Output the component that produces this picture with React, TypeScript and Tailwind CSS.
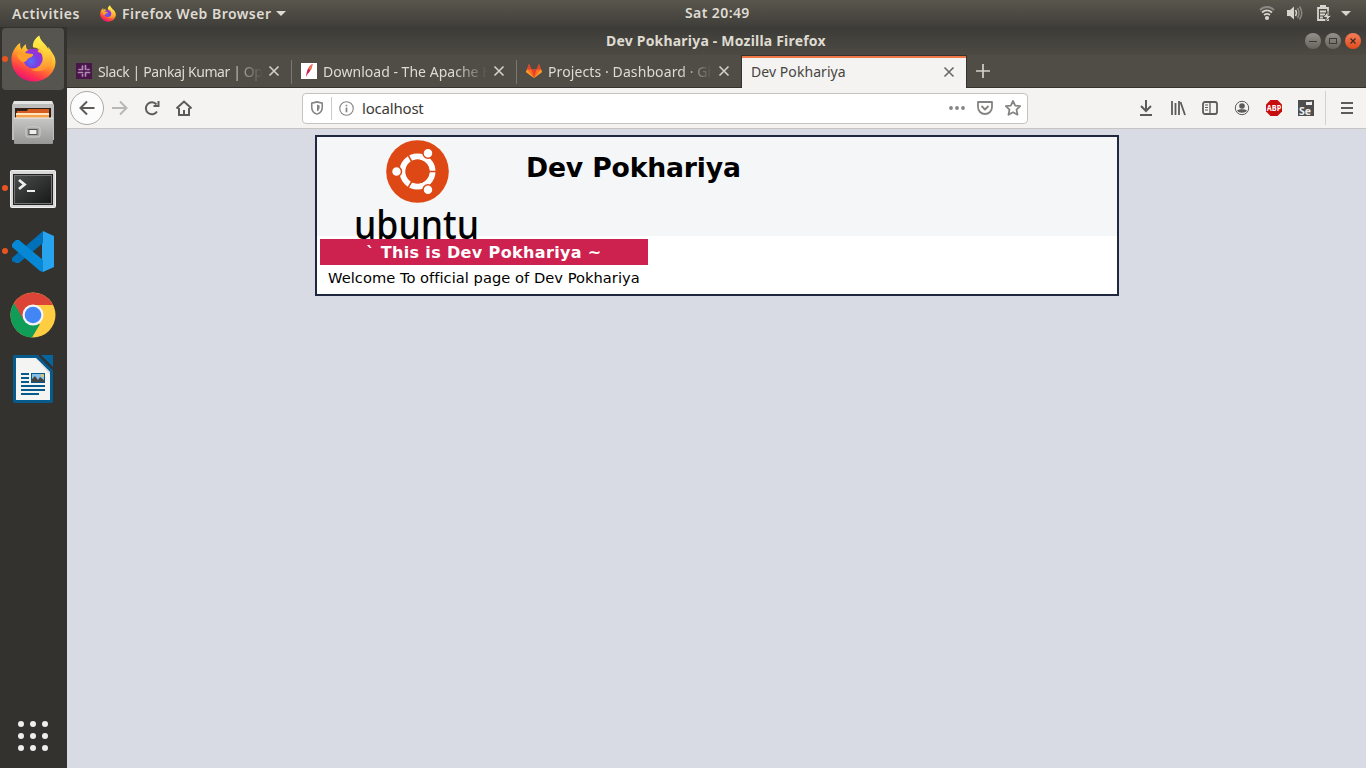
import React from "react";

const ui = "font-['Noto_Sans','Open_Sans',sans-serif] whitespace-nowrap";

function Firefox({ className, id }: { className: string; id: string }) {
  return (
    <svg viewBox="0 0 46 48" className={className}>
      <defs>
        <linearGradient id={id + "a"} x1="0.8" y1="0.05" x2="0.3" y2="1">
          <stop offset="0" stopColor="#fff44f" />
          <stop offset="0.35" stopColor="#ffb52a" />
          <stop offset="0.6" stopColor="#ff6a33" />
          <stop offset="0.8" stopColor="#ff3150" />
          <stop offset="1" stopColor="#e3107c" />
        </linearGradient>
        <radialGradient id={id + "b"} cx="0.4" cy="0.65" r="0.65">
          <stop offset="0" stopColor="#5b6df8" />
          <stop offset="0.5" stopColor="#7542e5" />
          <stop offset="1" stopColor="#a52bd0" />
        </radialGradient>
        <linearGradient id={id + "c"} x1="0.5" y1="0" x2="0.6" y2="1">
          <stop offset="0" stopColor="#fff44f" />
          <stop offset="0.5" stopColor="#ffd13a" />
          <stop offset="1" stopColor="#ff8a33" />
        </linearGradient>
      </defs>
      <path d="M9.500 8C9 11 9.500 13 11 14.500C12 12 13.500 10.500 15.500 9.500C15 12 15.500 13.500 17 15H27L38 14C42 17 45.500 22 45.500 27C45.500 39 35 47.500 23 47.500S0.500 38 0.500 25C0.500 18 4 12 9.500 8Z" fill={`url(#${id}a)`} />
      <path d="M29 0.500C23.500 4 22 8.500 22.500 12.500C29 13 33 18 32.500 23C32 30 27 34.500 20.500 35.500C31 40 42 34 42.500 23C43 19 41 16 38 12C38 13 38 14 38.500 15C36 9 30 7 29 0.500Z" fill={`url(#${id}c)`} />
      <circle cx="22.500" cy="24" r="10" fill={`url(#${id}b)`} />
      <path d="M6 19C12 17 16 19 22.500 19.500C23.500 22 19 23.500 17.500 24C16.500 25.500 15 28 12 27.500C8 26 6 22 6 19Z" fill="#ffa02a" />
      <path d="M26 13C33 14 35.500 20 32.500 25C33 20 31 18 27 17C30 16 29 14 26 13Z" fill="#ffc633" />
    </svg>
  );
}

function Close({ color }: { color: string }) {
  return (
    <svg viewBox="0 0 12 12" className="size-3 shrink-0" fill="none" stroke={color} strokeWidth="1.6">
      <path d="M1.500 1.500L10.500 10.500M10.500 1.500L1.500 10.500" />
    </svg>
  );
}

function Tab({ icon, children, tracking }: { icon: React.ReactNode; children: React.ReactNode; tracking: string }) {
  return (
    <div className="flex h-8 w-[225px] items-center pl-[9px] pr-[12px]">
      <div className="mr-[6px] size-4 shrink-0">{icon}</div>
      <div className={`mt-px h-5 w-[165px] overflow-hidden text-[14px] leading-5 text-[#dfdbd2] [mask-image:linear-gradient(90deg,#000_80%,transparent)] ${ui} ${tracking}`}>{children}</div>
      <div className="ml-[5px]"><Close color="#d5d1c8" /></div>
    </div>
  );
}

const Sep = () => <div className="-ml-px mt-[5px] h-6 w-px shrink-0 bg-[#7b7871]" />;

function TopBar() {
  return (
    <header className="flex h-[27px] shrink-0 items-center bg-linear-to-b from-[#59564d] to-[#403e39] pb-px text-[14px] font-semibold text-[#dfdbd2]">
      <div className={`w-[100px] pl-3 tracking-[0.56px] ${ui}`}>Activities</div>
      <Firefox id="s" className="h-[17px] w-4" />
      <div className={`ml-[6px] w-[150px] tracking-[0.48px] ${ui}`}>Firefox Web Browser</div>
      <svg viewBox="0 0 10 5" className="ml-1 h-[5px] w-[10px]"><path d="M0 0H10L5 5Z" fill="#dfdbd2" /></svg>
      <div className={`ml-[399px] mb-px w-[70px] tracking-[0.4px] ${ui}`}>Sat 20:49</div>
      <div className="ml-auto flex items-center pr-[15px]">
        <svg viewBox="0 0 16 16" className="size-4" fill="none" stroke="#d6d4cf" strokeWidth="1.800">
          <path d="M1 5C5 1 11 1 15 5" stroke="#8b8984" />
          <path d="M3 7.500C6 4.800 10 4.800 13 7.500M5 10C7 8.500 9 8.500 11 10" />
          <circle cx="8" cy="13" r="1.200" fill="#d6d4cf" />
        </svg>
        <svg viewBox="0 0 16 16" className="ml-[12px] size-4" fill="none" strokeWidth="1.500">
          <path d="M0 5H3L7 1.500V14.500L3 11H0Z" fill="#d6d4cf" />
          <path d="M8.500 5Q10.500 8 8.500 11" stroke="#d6d4cf" />
          <path d="M10.500 3Q13.500 8 10.500 13M12.500 1.500Q17 8 12.500 14.500" stroke="#8b8984" />
        </svg>
        <svg viewBox="0 0 16 18" className="ml-[13px] h-[18px] w-4">
          <path d="M2 4H12V16H2ZM4 2H10M4 7.500H10M4 10.500H9M4 13.500H7" fill="none" stroke="#d6d4cf" strokeWidth="1.800" />
          <path d="M12 7.500L7 13.500H10.500L9 18L15.500 11.500H12Z" fill="#d6d4cf" stroke="#4b4942" strokeWidth=".8" />
        </svg>
        <svg viewBox="0 0 10 5" className="ml-[9px] h-[5px] w-[10px]"><path d="M0 0H10L5 5Z" fill="#d6d4cf" /></svg>
      </div>
    </header>
  );
}

const dot = <span className="ml-[2px] size-[6px] shrink-0 rounded-full bg-[#e95420]" />;

function Dock() {
  return (
    <aside className="flex w-[67px] shrink-0 flex-col bg-[#33322e]">
      <div className="flex h-[64px] items-center">
        <div className="ml-[2px] flex h-[62px] w-[62px] items-center rounded-[4px] bg-[#565550]">
          <span className="size-[6px] shrink-0 rounded-full bg-[#e95420]" />
          <Firefox id="d" className="mb-[2px] ml-[3px] h-[47px] w-[45px]" />
        </div>
      </div>
      <div className="flex h-16 items-center pl-[12px]">
        <svg viewBox="0 0 42 44" className="mb-[2px] h-[44px] w-[42px]">
          <defs><linearGradient id="fg" x1="0" x2="0" y2="1"><stop stopColor="#c7c7c6" /><stop offset="1" stopColor="#979796" /></linearGradient></defs>
          <path d="M2 1H40L42 5V40H0V5Z" fill="#bdbdbc" /><path d="M2 1H40L41 4H1Z" fill="#e5e5e4" />
          <path d="M3 8H39V18H3Z" fill="#30201a" /><path d="M5 11H15L16 9H37V17H4Z" fill="#d65d22" /><path d="M4 13H37V15H4Z" fill="#ffe5bd" /><path d="M4 15H37V18H4Z" fill="#f5a04a" />
          <rect x="2" y="18" width="39" height="26" rx="1" fill="url(#fg)" /><path d="M2 18H41" stroke="#eee" />
          <rect x="14" y="27" width="14" height="10" rx="2" fill="#a6a6a5" stroke="#cecece" /><rect x="17" y="29.500" width="8" height="5" fill="#eee" stroke="#555" />
        </svg>
      </div>
      <div className="flex h-[66px] items-center">
        {dot}
        <svg viewBox="0 0 46 38" className="ml-[2px] mt-px h-[38px] w-[46px]">
          <defs><linearGradient id="tg" x1="0" x2="1" y2="1"><stop stopColor="#4b4d4d" /><stop offset="1" stopColor="#171919" /></linearGradient></defs>
          <rect x=".5" y=".5" width="45" height="37" rx="1" fill="#d8d8d8" stroke="#f0f0f0" /><rect x="3" y="4" width="40" height="31" fill="#222" />
          <rect x="4.500" y="5.500" width="37" height="28" fill="url(#tg)" stroke="#737373" />
          <path d="M9 10L14.500 14.500L9 19" fill="none" stroke="#eee" strokeWidth="2.800" /><path d="M17 21H25" stroke="#eee" strokeWidth="2" />
        </svg>
      </div>
      <div className="flex h-[60px] items-center">
        {dot}
        <svg viewBox="0 0 42 43" className="ml-[4px] h-[43px] w-[42px]">
          <path d="M31 1L42 6V37L31 42L30 31V12Z" fill="#28a4ee" />
          <path d="M31 1L0 28V31L4 33L7 33L31 13Z" fill="#0070b8" />
          <path d="M0 14L4 10L7 10L31 30V42L28 41L0 17Z" fill="#0788d4" />
        </svg>
      </div>
      <div className="flex h-[68px] items-center pl-[10px]">
        <svg viewBox="0 0 46 46" className="size-[46px]">
          <circle cx="23" cy="23" r="22.500" fill="#ffcd42" />
          <path d="M23 23L4 11A22.500 22.500 0 0 1 43 13H23Z" fill="#db4437" />
          <path d="M4 11L15 28L23 33L30 32L22 45.500A22.500 22.500 0 0 1 4 11Z" fill="#0f9d58" />
          <path d="M4 11L13 27L19 13Z" fill="#db4437" />
          <circle cx="23" cy="23" r="10.500" fill="#f5f5f5" /><circle cx="23" cy="23" r="8.300" fill="#4285f4" />
        </svg>
      </div>
      <div className="flex h-[60px] items-center pl-[13px]">
        <svg viewBox="0 0 40 48" className="h-[48px] w-[40px]">
          <path d="M1 0H26L40 14V46Q40 48 38 48H2Q0 48 0 46V1Z" fill="#075a8c" />
          <path d="M28 0H40V12Z" fill="#06659f" /><path d="M26 0L40 14" stroke="#33322e" strokeWidth="2" />
          <path d="M3 3H23L37 17V45H3Z" fill="#f4f4f3" /><path d="M23 3L37 17V20Z" fill="#ddd" />
          <path d="M8 19H16M8 23H16M8 27H16M8 31H32M8 35H32M8 39H26" stroke="#075a8c" strokeWidth="2" />
          <rect x="18.500" y="18.500" width="13" height="9" fill="#85bfe8" stroke="#075a8c" /><path d="M19 27V24L22 21L25 25L27 22L31 25V27Z" fill="#444" /><circle cx="29.500" cy="20.500" r="1.500" fill="#f6c34a" />
        </svg>
      </div>
      <div className="mt-auto mb-[17px] ml-[18px] grid w-[30px] grid-cols-3 gap-[6px]">
        {Array.from({ length: 9 }, (_, i) => <span key={i} className="size-[6px] rounded-full bg-[#eeeeec]" />)}
      </div>
    </aside>
  );
}

function Titlebar() {
  return (
    <div className="flex h-[28px] shrink-0 items-center bg-linear-to-b from-[#3c3b37] to-[#4d4a43] pr-[5px]">
      <div className={`ml-[539px] mb-[2px] text-[14px] font-bold text-[#dfdbd2] tracking-[0.2px] ${ui}`}>Dev Pokhariya - Mozilla Firefox</div>
      <div className="ml-auto flex gap-1">
        <span className="flex size-4 items-center justify-center rounded-full bg-linear-to-b from-[#94918b] to-[#66645d]"><i className="h-px w-[8px] bg-[#3c3b37]" /></span>
        <span className="flex size-4 items-center justify-center rounded-full bg-linear-to-b from-[#94918b] to-[#66645d]"><i className="h-[6px] w-[8px] border border-[#3c3b37]" /></span>
        <span className="flex size-4 items-center justify-center rounded-full bg-linear-to-b from-[#f37d58] to-[#df4a16]"><svg viewBox="0 0 6 6" className="size-[6px]"><path d="M.5 .5L5.500 5.500M5.500 .5L.5 5.500" stroke="#3c2a22" strokeWidth="1.200" /></svg></span>
      </div>
    </div>
  );
}

function Tabs() {
  return (
    <div className="flex h-[33px] shrink-0 border-b border-[#33322e] bg-[#504d46]">
      <Tab tracking="tracking-[-0.4px]" icon={
        <svg viewBox="0 0 16 16" className="size-4"><rect width="16" height="16" fill="#4a154b" /><path d="M6.500 3V6.500M9.500 2.500V6.500M3 6.500H5M11.500 6.500H13M2.500 9.500H6.500M9.500 9.500V13M6.500 11.500V13M9.500 9.500H13.500" stroke="#b18ab3" strokeWidth="1.700" strokeLinecap="round" /></svg>
      }>Slack | Pankaj Kumar | OpsTree</Tab>
      <Sep />
      <Tab tracking="tracking-[0.02px]" icon={
        <svg viewBox="0 0 16 16" className="size-4"><rect width="16" height="16" fill="#fff" /><path d="M11.500 1C7.500 3 5.500 8 5 14L6.500 11C9 9 11 5 11.500 1Z" fill="#c92052" /><path d="M11.500 1C9 2 8 4 7.500 6L10 7C11 5 11.500 3 11.500 1Z" fill="#ef7650" /></svg>
      }>Download - The Apache HTTP</Tab>
      <Sep />
      <Tab tracking="tracking-[0.1px]" icon={
        <svg viewBox="0 0 16 16" className="size-4"><path d="M0 9L3 1L5.500 6.500H10.500L13 1L16 9L8 15Z" fill="#fc6d26" /><path d="M5.500 6.500H10.500L8 15Z" fill="#e24329" /><path d="M0 9L1 6.500L8 15ZM16 9L15 6.500L8 15Z" fill="#fca326" /><path d="M1 6.500L3 1L5.500 6.500ZM10.500 6.500L13 1L15 6.500Z" fill="#e24329" /></svg>
      }>Projects · Dashboard · GitLab</Tab>
      <div className="-ml-px flex h-[33px] w-[226px] shrink-0 items-center justify-between border-x border-t border-[#33322e] bg-[#f4f3f2] pl-[9px] pr-[11px] shadow-[inset_0_2px_0_#f07746]">
        <span className={`text-[14px] leading-5 text-[#46443e] tracking-[0.06px] ${ui}`}>Dev Pokhariya</span>
        <Close color="#6a6864" />
      </div>
      <svg viewBox="0 0 14 14" className="ml-[9px] mt-[9px] size-[14px]"><path d="M7 0V14M0 7H14" stroke="#d5d1c8" strokeWidth="1.700" /></svg>
    </div>
  );
}

function Toolbar() {
  const s = { fill: "none", stroke: "#5c5b59", strokeWidth: 2 };
  return (
    <div className="flex h-[41px] shrink-0 items-center border-b border-[#c6c5c4] bg-[#f4f3f2] pr-[11px]">
      <span className="ml-[3px] flex size-[34px] items-center justify-center rounded-full border border-[#aaa9a7] bg-[#fcfcfc]">
        <svg viewBox="0 0 16 16" className="size-4" {...s}><path d="M15.500 8H1.500M8 1.500L1.500 8L8 14.500" /></svg>
      </span>
      <svg viewBox="0 0 16 16" className="ml-[8px] size-4" {...s} stroke="#b8b7b5"><path d="M0 8H14M8 1.500L14.500 8L8 14.500" /></svg>
      <svg viewBox="0 0 16 16" className="ml-4 size-4" {...s}><path d="M13 11.500A6 6 0 1 1 12.500 4.500M14.500 1V6H9.500" /></svg>
      <svg viewBox="0 0 16 16" className="ml-4 size-4" {...s}><path d="M.5 8.500L8 1.500L15.500 8.500M3 8V15H13V8M8 15V10" /></svg>
      <div className="ml-[110px] flex h-[31px] w-[726px] items-center rounded-[4px] border border-[#c5c2bf] bg-white px-[7px]">
        <svg viewBox="0 0 16 16" className="size-[14px]" fill="none" stroke="#858482" strokeWidth="1.800"><path d="M8 1L14 2.500V7C14 11 11 14 8 15C5 14 2 11 2 7V2.500Z" /><path d="M8 4L11 5V7C11 9 10 11 8 12Z" fill="#858482" stroke="none" /></svg>
        <span className="ml-[7px] h-[23px] w-px bg-[#cccbc9]" />
        <svg viewBox="0 0 16 16" className="ml-[7px] size-[15px]" fill="none" stroke="#858482"><circle cx="8" cy="8" r="7.200" strokeWidth="1.200" /><path d="M8 7V12M8 4V5.500" strokeWidth="1.800" /></svg>
        <span className={`ml-[8px] text-[15px] text-[#3b3a37] tracking-[-0.2px] ${ui}`}>localhost</span>
        <svg viewBox="0 0 16 16" className="ml-auto size-4" fill="#858482"><circle cx="2" cy="8" r="1.900" /><circle cx="8" cy="8" r="1.900" /><circle cx="14" cy="8" r="1.900" /></svg>
        <svg viewBox="0 0 16 16" className="ml-3 size-4" fill="none" stroke="#858482" strokeWidth="1.800"><path d="M1 2H15V7C15 11 12 14 8 14S1 11 1 7ZM4.500 6L8 9.500L11.500 6" strokeLinejoin="round" /></svg>
        <svg viewBox="0 0 16 16" className="ml-3 -mr-[1px] size-4" fill="none" stroke="#858482" strokeWidth="1.800"><path d="M8 1L10.200 5.600L15.200 6.200L11.500 9.600L12.500 14.700L8 12.200L3.500 14.700L4.500 9.600L.8 6.200L5.800 5.600Z" strokeLinejoin="round" /></svg>
      </div>
      <div className="ml-auto flex items-center gap-4">
        <svg viewBox="0 0 16 16" className="size-4" {...s}><path d="M8 0V11M3 6L8 11L13 6M2 15H14" /></svg>
        <svg viewBox="0 0 16 16" className="size-4" {...s} strokeWidth={1.8}><path d="M2 1V15M5.500 3V15M9 1V15M10.500 2L15 15" /></svg>
        <svg viewBox="0 0 16 16" className="size-4" {...s} strokeWidth={1.8}><rect x="1" y="2" width="14" height="12" rx="2" /><path d="M8 2V14" strokeWidth="1.300" /><path d="M3 5H6M3 7.500H6M3 10H6" strokeWidth="1" /></svg>
        <svg viewBox="0 0 16 16" className="size-4"><circle cx="8" cy="8" r="6.700" fill="none" stroke="#5c5b59" /><circle cx="8" cy="6" r="2.800" fill="#5c5b59" /><path d="M3 10.500C5 8.800 11 8.800 13 10.500C11.500 13.500 4.500 13.500 3 10.500Z" fill="#5c5b59" /></svg>
        <svg viewBox="0 0 16 16" className="size-4"><path d="M4.500 0H11.500L16 4.500V11.500L11.500 16H4.500L0 11.500V4.500Z" fill="#c70d0d" /><text x=".8" y="11.200" textLength="14.400" lengthAdjust="spacingAndGlyphs" fill="#fff" fontFamily="Open Sans" fontWeight="700" fontSize="9">ABP</text></svg>
        <svg viewBox="0 0 16 16" className="size-4"><rect width="16" height="16" fill="#4e4e4e" /><path d="M8 2H12L14 1.500V5H8Z" fill="#eee" /><text x="1" y="14.500" textLength="12" lengthAdjust="spacingAndGlyphs" fill="#eee" fontFamily="Open Sans" fontWeight="700" fontSize="10.500">Se</text></svg>
      </div>
      <span className="ml-[11px] h-[34px] w-px bg-[#d2d1cf]" />
      <svg viewBox="0 0 16 16" className="ml-[13px] size-4" {...s}><path d="M2 3H14M2 8H14M2 13H14" /></svg>
    </div>
  );
}

function UbuntuLogo() {
  return (
    <svg viewBox="0 0 124 100" className="ml-[38px] block h-[100px] w-[124px]">
      <circle cx="62.500" cy="31.500" r="31.300" fill="#dd4814" />
      <circle cx="62.500" cy="31.500" r="15" fill="none" stroke="#fff" strokeWidth="6" />
      <path d="M62.500 31.500H84M62.500 31.500L51.750 12.900M62.500 31.500L51.750 50.100" stroke="#dd4814" strokeWidth="1.600" />
      <circle cx="62.500" cy="31.500" r="12" fill="#dd4814" />
      <g fill="#fff" stroke="#dd4814" strokeWidth="1.500"><circle cx="41.500" cy="31.500" r="5" /><circle cx="73" cy="13.300" r="5" /><circle cx="73" cy="49.700" r="5" /></g>
      <text x="-1" y="98.500" textLength="125" lengthAdjust="spacingAndGlyphs" fontFamily="Noto Sans" fontWeight="500" fontSize="40">ubuntu</text>
    </svg>
  );
}

export default function App() {
  return (
    <div className="flex h-screen w-screen flex-col overflow-hidden">
      <TopBar />
      <div className="flex min-h-0 flex-1">
        <Dock />
        <div className="flex min-w-0 flex-1 flex-col">
          <Titlebar />
          <Tabs />
          <Toolbar />
          <main className="flex-1 bg-[#d8dbe3] pt-[6px] font-['DejaVu_Sans',sans-serif] text-black">
            <div className="ml-[248px] h-[161px] w-[804px] border-2 border-[#202840] bg-white">
              <div className="flex h-[99px] bg-[#f5f6f8] pt-[3px]">
                <UbuntuLogo />
                <h1 className="ml-[47px] mt-[11px] whitespace-nowrap text-[26.660px] leading-[34px] font-bold tracking-[-0.18px]">Dev Pokhariya</h1>
              </div>
              <div className="mt-[3px] ml-[3px] h-[26px] w-[328px] bg-[#cd214f] text-center text-[16px] leading-[28px] font-bold tracking-[0.36px] whitespace-pre text-white">` This is Dev Pokhariya ~</div>
              <p className="mt-[3px] ml-[11px] whitespace-nowrap text-[14.660px] leading-5 tracking-[0.03px]">Welcome To official page of Dev Pokhariya</p>
            </div>
          </main>
        </div>
      </div>
    </div>
  );
}
